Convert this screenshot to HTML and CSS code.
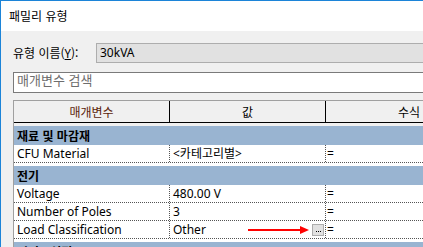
FILE: index.html
```html
<!DOCTYPE html>
<html lang="ko">
<head>
<meta charset="utf-8">
<link rel="stylesheet" href="styles.css">
</head>
<body>
<div class="window">
  <div class="titlebar">패밀리 유형</div>
  <div class="content">
    <div class="type-row">
      <span class="label">유형 이름(<u>Y</u>):</span>
      <div class="combo">30kVA</div>
    </div>
    <div class="search">매개변수 검색</div>
    <div class="table">
      <div class="thead">
        <div class="th c1 sorted">매개변수</div>
        <div class="th c2">값</div>
        <div class="th c3">수식</div>
      </div>
      <div class="group">재료 및 마감재</div>
      <div class="row">
        <div class="td c1">CFU Material</div>
        <div class="td c2">&lt;카테고리별&gt;</div>
        <div class="td c3">=</div>
      </div>
      <div class="group">전기</div>
      <div class="row">
        <div class="td c1">Voltage</div>
        <div class="td c2">480.00 V</div>
        <div class="td c3">=</div>
      </div>
      <div class="row">
        <div class="td c1">Number of Poles</div>
        <div class="td c2">3</div>
        <div class="td c3">=</div>
      </div>
      <div class="row">
        <div class="td c1">Load Classification</div>
        <div class="td c2 with-btn">
          <span>Other</span>
          <span class="arrow"><span class="shaft"></span><span class="head"></span></span>
          <span class="dots"><i></i><i></i><i></i></span>
        </div>
        <div class="td c3">=</div>
      </div>
      <div class="group">전기 - 설정</div>
    </div>
  </div>
</div>
</body>
</html>
```

FILE: styles.css
```css
* { box-sizing: border-box; }
html, body {
  margin: 0;
  padding: 0;
  width: 423px;
  height: 247px;
  overflow: hidden;
  background: #f0f0f0;
}
body {
  font-family: "Noto Sans", "Noto Sans CJK KR", sans-serif;
  font-size: 12px;
  color: #000;
}
.window {
  width: 423px;
  height: 247px;
  border-left: 1px solid #1c84d8;
  border-top: 1px solid #1c84d8;
  background: #f0f0f0;
  overflow: hidden;
}
.titlebar {
  height: 30px;
  background: #fff;
  padding-left: 8px;
  line-height: 30px;
  font-family: "Noto Sans CJK KR", sans-serif;
  font-size: 12px;
}
.content {
  padding: 12px 0 0 12px;
}
.type-row {
  display: flex;
  align-items: center;
  height: 20px;
}
.label {
  width: 83px;
  font-family: "Noto Sans CJK KR", sans-serif;
  line-height: 20px;
}
.label u { text-decoration-thickness: 1px; }
.combo {
  flex: 1;
  height: 20px;
  background: #e1e1e1;
  border: 1px solid #adadad;
  border-right: none;
  padding-left: 3px;
  line-height: 18px;
}
.search {
  margin-top: 9px;
  height: 21px;
  background: #fff;
  border: 1px solid #7a7a7a;
  border-right: none;
  padding-left: 3px;
  line-height: 13px;
  color: #6d6d6d;
  font-size: 13px;
  font-family: "Noto Sans CJK KR", sans-serif;
}
.table {
  margin-top: 7px;
  border-left: 1px solid #a0a0a0;
  border-top: 1px solid #a0a0a0;
  background: #fff;
}
.thead {
  display: flex;
  background: #f0f0f0;
  padding-bottom: 3px;
}
.th {
  height: 22px;
  border-bottom: 1px solid #000;
  text-align: center;
  line-height: 21px;
  font-family: "Noto Sans CJK KR", sans-serif;
}
.c1 { width: 156px; border-right: 1px solid #000; flex: none; }
.c2 { width: 156px; border-right: 1px solid #000; flex: none; }
.c3 { flex: 1; }
.th.c3 { text-align: left; padding-left: 72px; }
.sorted { color: #5a1e0a; }
.group {
  height: 19px;
  background: #99b4d1;
  font-weight: bold;
  padding-left: 3px;
  line-height: 19px;
  font-family: "Noto Sans CJK KR", sans-serif;
  margin-top: 3px;
}
.thead + .group { margin-top: 0; }
.row {
  display: flex;
  height: 18px;
  border-bottom: 1px dotted #555;
}
.td {
  height: 17px;
  line-height: 17px;
  padding-left: 3px;
  white-space: nowrap;
}
.td.c1, .td.c2 { border-right: 1px dotted #555; }
.td.c2 { padding-left: 3px; font-family: "Noto Sans", "Noto Sans CJK KR", sans-serif; }
.td.c3 { padding-left: 1px; }
.with-btn {
  display: flex;
  align-items: center;
}
.with-btn > span:first-child { flex: 1; }
.arrow {
  display: flex;
  align-items: center;
  margin-right: 3px;
}
.shaft {
  width: 52px;
  height: 2px;
  background: #f00;
}
.head {
  width: 0;
  height: 0;
  border-top: 4px solid transparent;
  border-bottom: 4px solid transparent;
  border-left: 9px solid #f00;
}
.dots {
  width: 12px;
  height: 12px;
  background: #e1e1e1;
  border: 1px solid #adadad;
  margin-right: 1px;
  display: flex;
  justify-content: center;
  align-items: flex-end;
  gap: 1px;
  padding-bottom: 3px;
}
.dots i {
  display: block;
  width: 1px;
  height: 1px;
  background: #000;
}
```
